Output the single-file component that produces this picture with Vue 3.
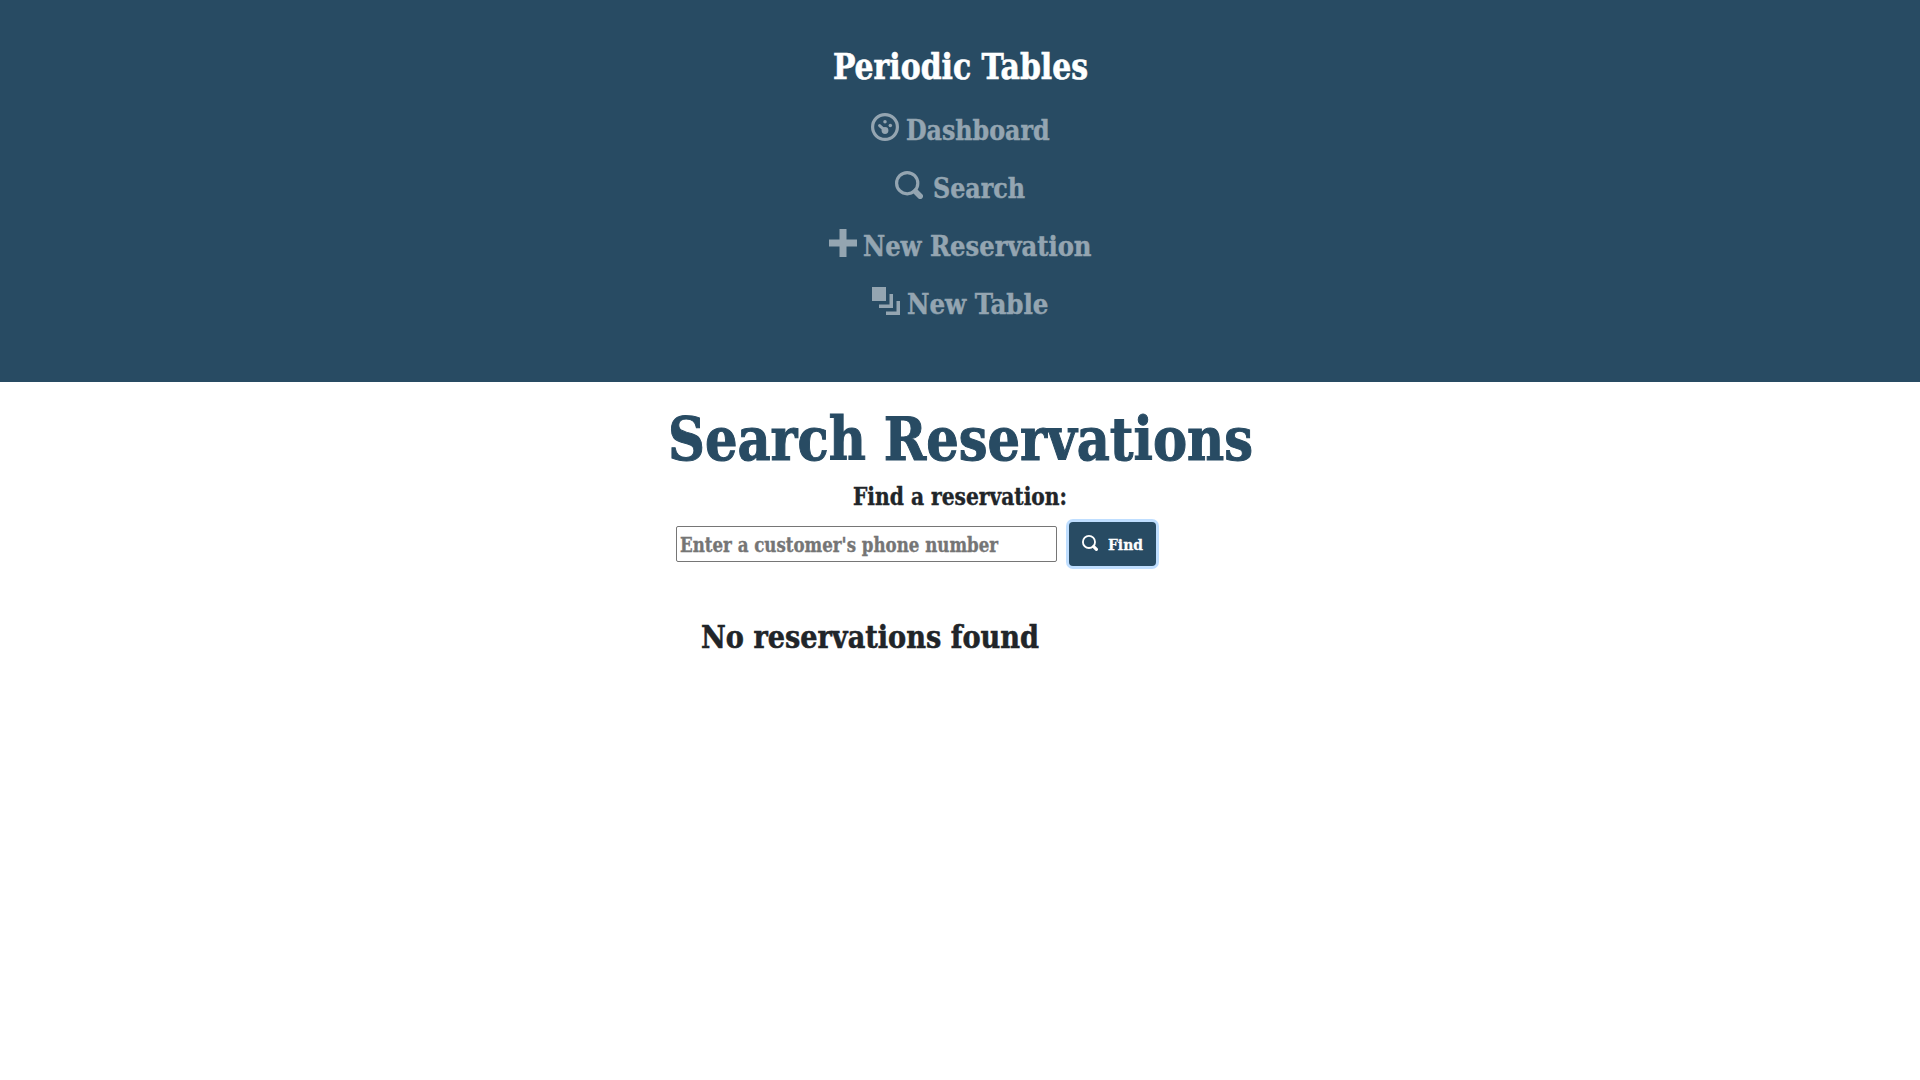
<script setup>
import { h } from 'vue'

// Single line of slab lettering set to a fixed measure.
const Line = (p) =>
  h('svg', { width: p.w, height: p.size, style: { overflow: 'visible', display: 'block', flex: 'none' } }, [
    h('text', {
      x: 0, y: p.size * 0.785, 'font-size': p.size * 0.975, fill: 'currentColor',
      stroke: 'currentColor', 'stroke-width': p.size * 0.016,
      textLength: p.w, lengthAdjust: 'spacingAndGlyphs'
    }, p.text)
  ])
Line.props = ['text', 'w', 'size']

const links = [
  { icon: 'dashboard', text: 'Dashboard', w: 143.5, gap: 6.5 },
  { icon: 'search', text: 'Search', w: 92, gap: 10 },
  { icon: 'plus', text: 'New Reservation', w: 228.5, gap: 6.5 },
  { icon: 'layers', text: 'New Table', w: 141.5, gap: 6.5 }
]
</script>

<template>
  <div class="page">
    <header>
      <div class="brand"><Line text="Periodic Tables" :w="255" :size="36" /></div>
      <nav>
        <a v-for="l in links" :key="l.text" :style="{ gap: l.gap + 'px' }">
          <svg class="icon" width="28" height="28" viewBox="0 0 28 28" fill="currentColor">
            <g v-if="l.icon === 'dashboard'">
              <circle cx="14" cy="14" r="12.4" fill="none" stroke="currentColor" stroke-width="3.2" />
              <circle cx="14" cy="17.5" r="3.4" />
              <path d="M14 17.5 8.6 12.6" stroke="currentColor" stroke-width="3" stroke-linecap="round" />
              <circle cx="14" cy="8.7" r="1.75" />
              <circle cx="19.3" cy="12.4" r="1.75" />
            </g>
            <g v-else-if="l.icon === 'search'" fill="none" stroke="currentColor">
              <circle cx="12.2" cy="12.2" r="10.6" stroke-width="3.2" />
              <path d="M20.5 20.5 25.2 25.2" stroke-width="5.6" stroke-linecap="round" />
            </g>
            <path v-else-if="l.icon === 'plus'" d="M10.5 0h7v10.5H28v7H17.5V28h-7V17.5H0v-7h10.5z" />
            <path v-else d="M0 0h14v14H0zM17.5 7H21v14H7v-3.5h10.5zM24.5 14H28v14H14v-3.5h10.5z" />
          </svg>
          <Line :text="l.text" :w="l.w" :size="28" />
        </a>
      </nav>
    </header>
    <main>
      <h1><Line text="Search Reservations" :w="585" :size="61" /></h1>
      <form @submit.prevent>
        <label for="phone"><Line text="Find a reservation:" :w="214" :size="24" /></label>
        <div class="controls">
          <div class="field">
            <input id="phone" type="text" />
            <div class="hint"><Line text="Enter a customer's phone number" :w="318" :size="20" /></div>
          </div>
          <button type="submit">
            <svg class="glass" width="16" height="16" viewBox="0 0 28 28" fill="none" stroke="currentColor">
              <circle cx="12.2" cy="12.2" r="10.6" stroke-width="3.2" />
              <path d="M20.5 20.5 25.2 25.2" stroke-width="5.6" stroke-linecap="round" />
            </svg>
            <Line text="Find" :w="35" :size="16" />
          </button>
        </div>
      </form>
      <h2><Line text="No reservations found" :w="338" :size="32" /></h2>
    </main>
  </div>
</template>

<style>
body { background: #fff; }
</style>

<style scoped>
.page, .page input, .page button {
  font-family: "Roboto Slab", "DejaVu Serif Condensed", "DejaVu Serif", serif;
  font-weight: 700;
}
.page { min-height: 1080px; color: #212529; }
header {
  box-sizing: border-box;
  height: 382px;
  padding-top: 51px;
  background: #284b63;
}
.brand { display: flex; justify-content: center; color: #fff; }
nav { display: flex; flex-direction: column; align-items: center; padding-top: 21px; color: #94a5b1; }
nav a { display: flex; align-items: flex-start; height: 58px; }
nav a .icon { display: block; margin-top: 5px; }
nav a > :last-child { margin-top: 9.6px; }
h1, h2 { margin: 0; }
h1 { display: flex; justify-content: center; padding-top: 30px; color: #284b63; }
label { display: flex; justify-content: center; padding-top: 13px; }
.controls { display: flex; align-items: center; gap: 12px; margin: 12px 0 0 676px; height: 44px; }
.field { position: relative; width: 381px; height: 36px; }
input {
  box-sizing: border-box;
  display: block;
  width: 100%;
  height: 100%;
  padding: 1px 3px;
  border: 1px solid #767676;
  border-radius: 2px;
  font-size: 20px;
}
.hint { position: absolute; left: 4px; top: 10px; color: #757575; pointer-events: none; }
button {
  box-sizing: border-box;
  display: flex;
  align-items: center;
  gap: 10px;
  width: 87px;
  height: 44px;
  padding: 0 13px;
  border: 0;
  border-radius: 4px;
  background: #284b63;
  color: #fff;
  box-shadow: 0 0 0 3px #bfdeff;
}
.glass { flex: none; margin-top: -2px; }
button > :last-child { margin-top: 2px; }
h2 { padding: 57px 0 0 701px; }
</style>
